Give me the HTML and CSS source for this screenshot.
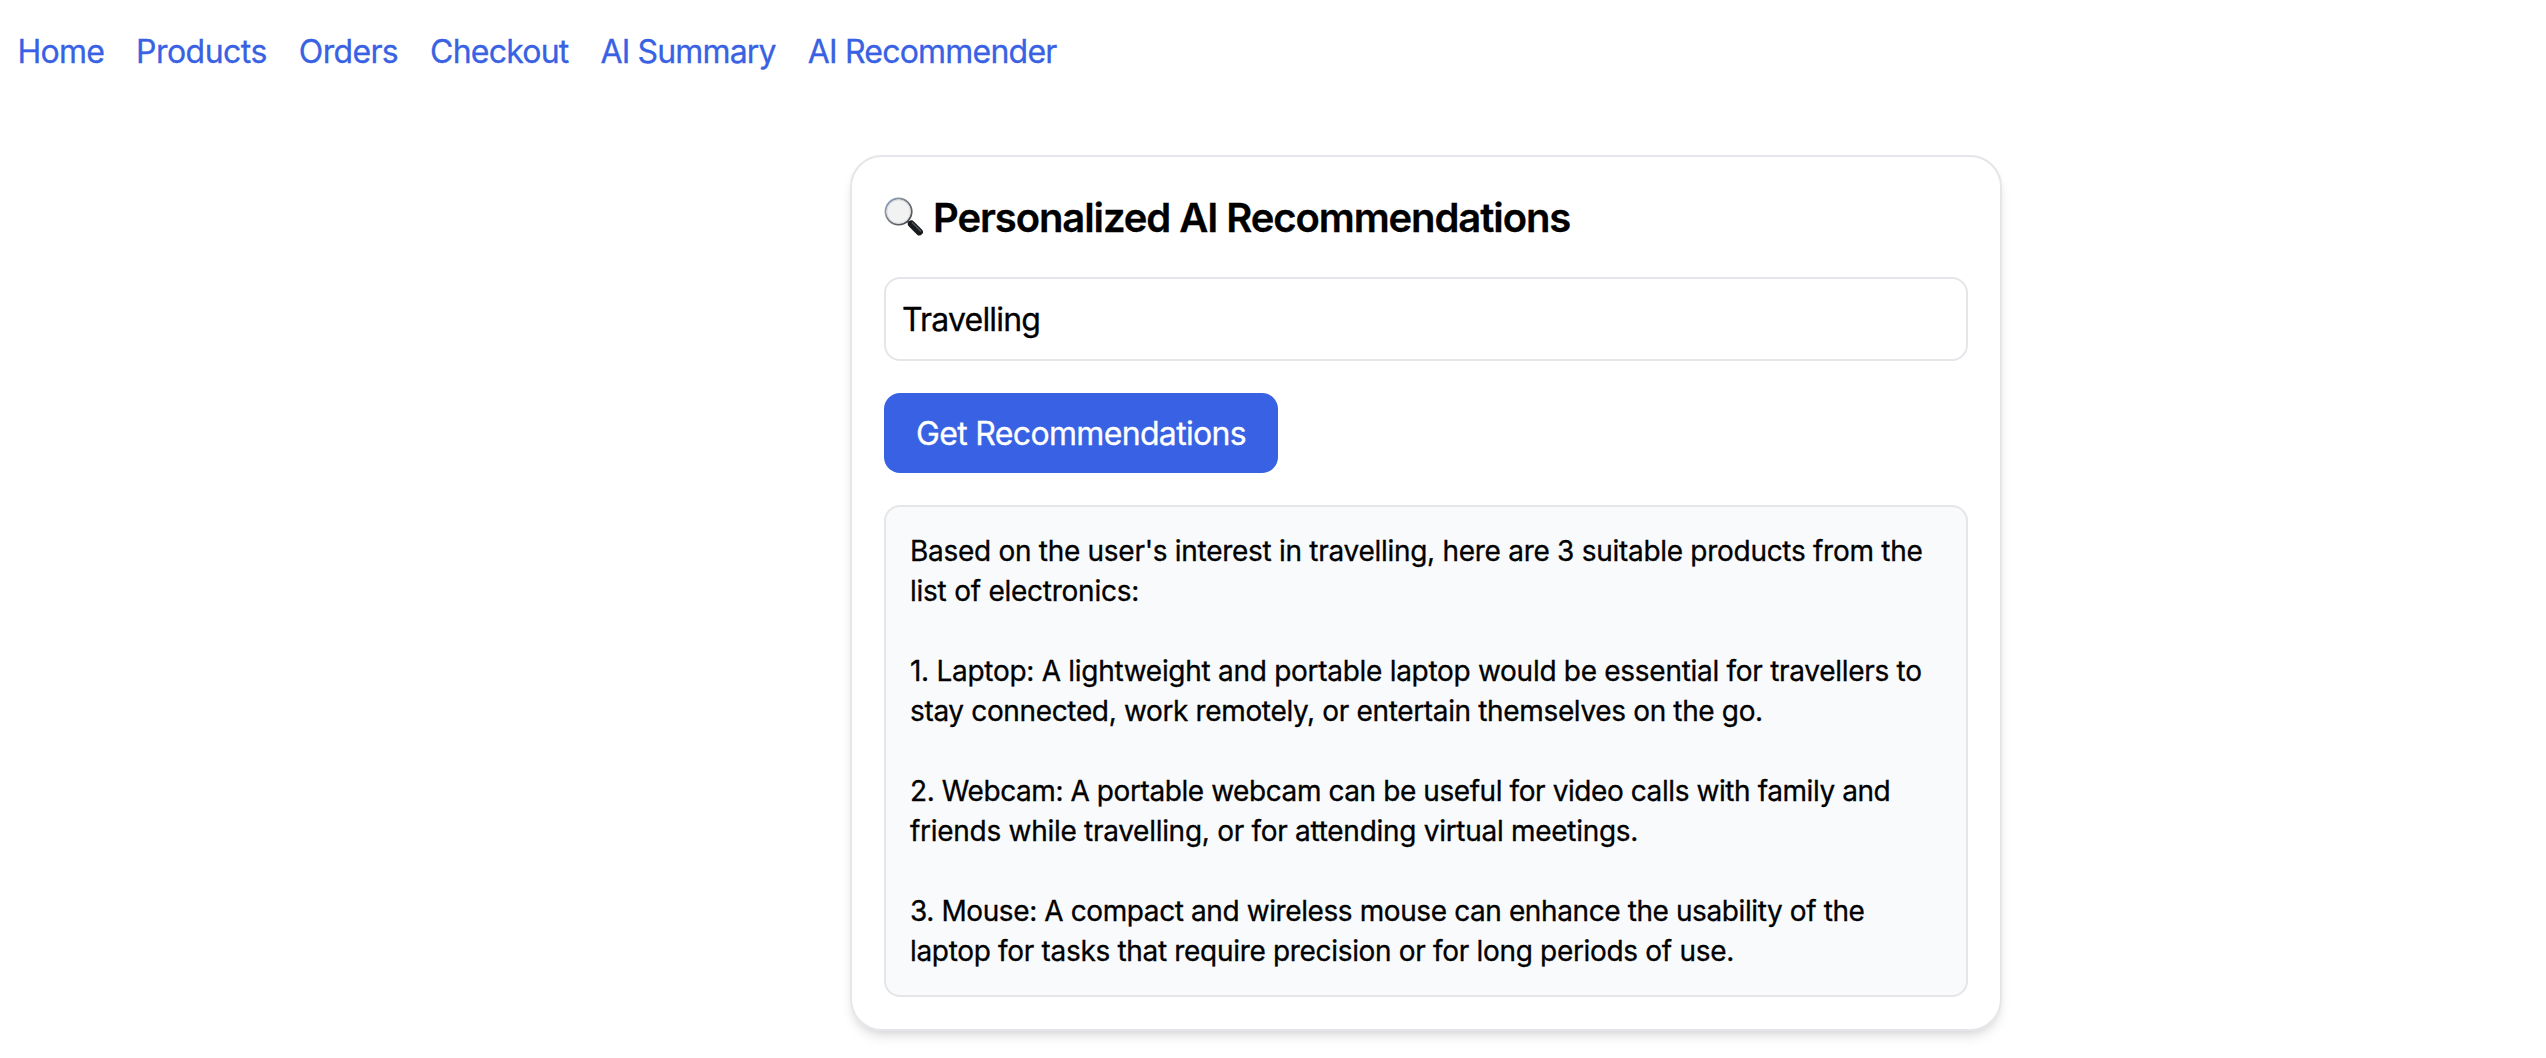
FILE: index.html
```html
<!DOCTYPE html>
<html lang="en">
<head>
<meta charset="utf-8">
<title>AI Recommender</title>
<link rel="stylesheet" href="styles.css">
</head>
<body>
<nav class="nav">
  <a class="nav-home">Home</a>
  <a class="nav-products">Products</a>
  <a class="nav-orders">Orders</a>
  <a class="nav-checkout">Checkout</a>
  <a class="nav-summary">AI Summary</a>
  <a class="nav-recommender">AI Recommender</a>
</nav>
<main class="card">
  <h2 class="title">
    <svg class="lens" viewBox="0 0 40 40" aria-hidden="true">
      <defs>
        <linearGradient id="rim" x1="0" y1="0" x2="1" y2="1">
          <stop offset="0" stop-color="#7e9cd0"/>
          <stop offset=".3" stop-color="#8d9299"/>
          <stop offset="1" stop-color="#3c3e42"/>
        </linearGradient>
      </defs>
      <path d="M23 23.5l4 4" stroke="#55585d" stroke-width="2.6"/>
      <path d="M27.4 27l8 7.9" stroke="#17191c" stroke-width="7" stroke-linecap="round"/>
      <path d="M28.4 25.8l8.2 8.1" stroke="#51565d" stroke-width="1.4" stroke-linecap="round"/>
      <circle cx="14.6" cy="14.6" r="13.1" fill="#f2f2f3" stroke="url(#rim)" stroke-width="1.8"/>
      <circle cx="14.6" cy="14.6" r="11.7" fill="none" stroke="#d9dce0" stroke-width="1"/>
    </svg>
    <span class="title-text">Personalized AI Recommendations</span>
  </h2>
  <input class="field" type="text" value="Travelling">
  <button class="submit" type="button">Get Recommendations</button>
  <section class="result">
    <p><span class="l1">Based on the user's interest in travelling, here are 3 suitable products from the</span><span class="l2">list of electronics:</span></p>
    <p><span class="l1">1. Laptop: A lightweight and portable laptop would be essential for travellers to</span><span class="l4">stay connected, work remotely, or entertain themselves on the go.</span></p>
    <p><span class="l5">2. Webcam: A portable webcam can be useful for video calls with family and</span><span class="l6">friends while travelling, or for attending virtual meetings.</span></p>
    <p><span class="l7">3. Mouse: A compact and wireless mouse can enhance the usability of the</span><span class="l8">laptop for tasks that require precision or for long periods of use.</span></p>
  </section>
</main>
</body>
</html>
```
FILE: styles.css
```css
* { box-sizing: border-box; }
body {
  margin: 0;
  min-height: 100vh;
  background: #fff;
  color: #000;
  font: 32px/48px Inter, sans-serif;
  -webkit-text-stroke: .3px;
}
.nav {
  display: flex;
  gap: 32px;
  padding: 28px 17.5px 0;
  color: #3862e3;
}
.nav-home { letter-spacing: -.79px; }
.nav-products { letter-spacing: -.52px; }
.nav-orders { letter-spacing: -.65px; }
.nav-checkout { letter-spacing: -.78px; }
.nav-summary { letter-spacing: -.86px; }
.nav-recommender { letter-spacing: -.78px; }

.card {
  display: flex;
  flex-direction: column;
  align-items: flex-start;
  gap: 32px;
  width: 1152px;
  margin: 79px 0 0 850px;
  padding: 32px;
  border: 2px solid #e5e5ea;
  border-radius: 32px;
  box-shadow: 0 8px 12px -2px rgba(0, 0, 0, .1), 0 4px 8px -4px rgba(0, 0, 0, .1);
}
.title {
  display: flex;
  align-items: center;
  gap: 9px;
  margin: 0;
  font-size: 40px;
  line-height: 56px;
  font-weight: 600;
  letter-spacing: -1.09px;
}
.title-text { padding-top: 1px; line-height: 55px; }
.lens { width: 40px; height: 40px; fill: none; }
.field {
  width: 100%;
  height: 84px;
  padding: 0 16px;
  border: 2px solid #e5e5ea;
  border-radius: 16px;
  background: #fff;
  color: #000;
  font: inherit;
  letter-spacing: -.8px;
}
.submit {
  width: 394px;
  height: 80px;
  padding: 1px 0 0;
  border: 0;
  border-radius: 16px;
  background: #3862e3;
  color: #fff;
  font: inherit;
  letter-spacing: -.66px;
}
.result {
  display: flex;
  flex-direction: column;
  gap: 40px;
  width: 100%;
  padding: 24px;
  border: 2px solid #e5e5ea;
  border-radius: 16px;
  background: #f9fafc;
  font-size: 28px;
  line-height: 40px;
}
.result p { margin: 0; }
.result span { display: block; white-space: nowrap; }
.l1 { letter-spacing: -.285px; }
.l2 { letter-spacing: -.25px; }
.l4 { letter-spacing: -.35px; }
.l5 { letter-spacing: -.42px; }
.l6 { letter-spacing: -.285px; }
.l7 { letter-spacing: -.4px; }
.l8 { letter-spacing: -.32px; }
```
